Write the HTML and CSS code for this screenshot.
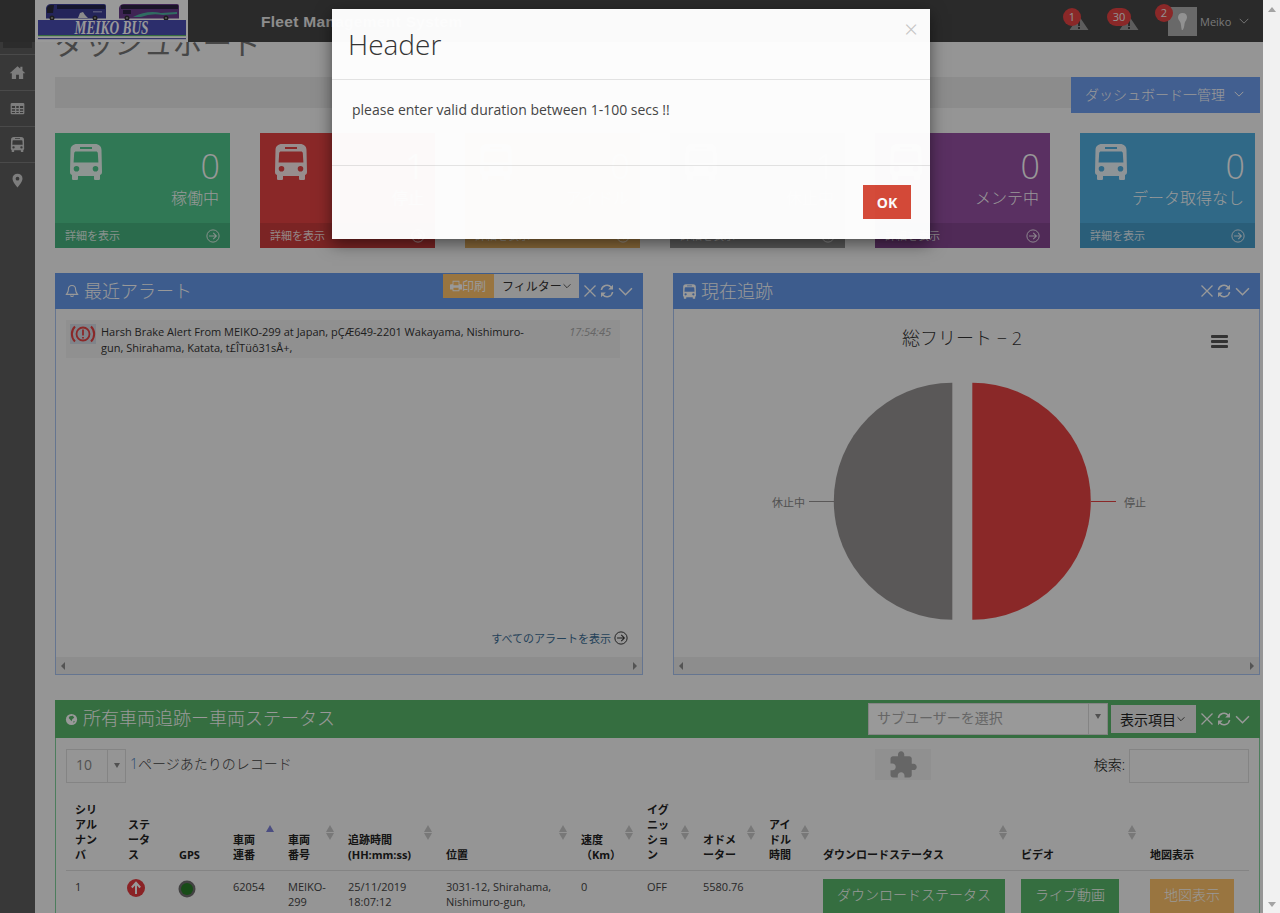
FILE: index.html
```html
<!DOCTYPE html>
<html lang="ja">
<head>
<meta charset="utf-8">
<title>Fleet Management System</title>
<link rel="stylesheet" href="styles.css">
</head>
<body>
<svg class="defs" aria-hidden="true">
  <symbol id="i-bus" viewBox="0 0 32 36"><path fill-rule="evenodd" d="M7 0h18c4 0 6.500 2.500 6.500 6l.5 22c0 1.500-.6 2.500-2 3v3.500c0 1-.6 1.500-1.500 1.500h-3c-1 0-1.500-.5-1.500-1.500V32H8v2.500C8 35.500 7.500 36 6.500 36h-3C2.600 36 2 35.500 2 34.500V31c-1.400-.5-2-1.500-2-3l.5-22C.5 2.500 3 0 7 0zM10 3v2h12V3zM6 7.500c-1 0-1.700.6-1.800 1.600l-.6 9.400h24.800l-.6-9.400c-.1-1-.8-1.600-1.800-1.600zM6.500 22a2.800 2.800 0 1 0 0 5.600 2.800 2.800 0 0 0 0-5.600zM25.500 22a2.800 2.800 0 1 0 0 5.600 2.800 2.800 0 0 0 0-5.600z"/></symbol>
  <symbol id="i-home" viewBox="0 0 24 24"><path d="M12 3 1 13h3v8h6v-6h4v6h6v-8h3l-4-3.700V4h-3v2.600z"/></symbol>
  <symbol id="i-table" viewBox="0 0 24 24"><path fill-rule="evenodd" d="M3 3h18a2 2 0 0 1 2 2v14a2 2 0 0 1-2 2H3a2 2 0 0 1-2-2V5a2 2 0 0 1 2-2zm0 5v3h5V8zm7 0v3h4V8zm6 0v3h5V8zM3 13v2.500h5V13zm7 0v2.500h4V13zm6 0v2.500h5V13zM3 17.500V19h5v-1.500zm7 0V19h4v-1.500zm6 0V19h5v-1.500z"/></symbol>
  <symbol id="i-marker" viewBox="0 0 24 24"><path fill-rule="evenodd" d="M12 1a8 8 0 0 0-8 8c0 5 8 14 8 14s8-9 8-14a8 8 0 0 0-8-8zm0 11a3 3 0 1 1 0-6 3 3 0 0 1 0 6z"/></symbol>
  <symbol id="i-arrow" viewBox="0 0 16 16"><circle cx="8" cy="8" r="7" fill="none" stroke="currentColor" stroke-width="1.100"/><path d="M3.500 8h8M8.300 4.500 11.800 8l-3.500 3.500" fill="none" stroke="currentColor" stroke-width="1.200"/></symbol>
  <symbol id="i-x" viewBox="0 0 14 14"><path d="M1.500 1.500l11 11M12.500 1.500l-11 11" fill="none" stroke="currentColor" stroke-width="1.300"/></symbol>
  <symbol id="i-refresh" viewBox="0 0 14 14"><path d="M1.400 6A5.600 5.600 0 0 1 11.200 3.200M12.600 8A5.600 5.600 0 0 1 2.800 10.800" fill="none" stroke="currentColor" stroke-width="1.500"/><path d="M13 .8v4.800H8.200zM1 13.200V8.400h4.800z"/></symbol>
  <symbol id="i-chev" viewBox="0 0 14 14"><path d="M1 4l6 6 6-6" fill="none" stroke="currentColor" stroke-width="1.400"/></symbol>
  <symbol id="i-bell" viewBox="0 0 14 14"><path d="M7 1.500c-2.400 0-3.600 1.800-3.600 4 0 2.600-1.300 3.700-2 4.900h11.200c-.7-1.200-2-2.300-2-4.900 0-2.200-1.200-4-3.600-4zM5.500 11.500a1.600 1.600 0 0 0 3 0" fill="none" stroke="currentColor" stroke-width="1.100"/></symbol>
  <symbol id="i-print" viewBox="0 0 14 14"><path fill-rule="evenodd" d="M3 1h8v4h2a1 1 0 0 1 1 1v5h-3v2H3v-2H0V6a1 1 0 0 1 1-1h2zm1 1v4h6V2zm0 7v3h6V9z"/></symbol>
  <symbol id="i-globe" viewBox="0 0 14 14"><circle cx="7" cy="7" r="6"/><path class="globe-land" d="M5 3.500l3.500-.5 1.500 2-2 1.500L7 9 5.500 7 4 5.500zM9 9l1.500-.5-1 2.500z"/></symbol>
  <symbol id="i-warn" viewBox="0 0 20 14"><path fill-rule="evenodd" d="M10 0l9.500 14H.5zM9 5v5h2V5zm0 6v2h2v-2z"/></symbol>
  <symbol id="i-puzzle" viewBox="0 0 24 24"><path d="M20.500 11H19V7c0-1.100-.9-2-2-2h-4V3.500C13 2.120 11.880 1 10.500 1S8 2.120 8 3.500V5H4c-1.100 0-1.990.9-1.990 2v3.800H3.500c1.490 0 2.700 1.210 2.700 2.700s-1.210 2.700-2.700 2.700H2V20c0 1.100.9 2 2 2h3.800v-1.500c0-1.490 1.210-2.700 2.700-2.700 1.490 0 2.700 1.210 2.700 2.700V22H17c1.100 0 2-.9 2-2v-4h1.500c1.380 0 2.500-1.120 2.500-2.500S21.880 11 20.500 11z"/></symbol>
</svg>

<div class="app">
  <div class="page">
    <header class="topbar">
      <div class="logo">
        <svg class="logo-art" viewBox="0 0 153 42">
          <path d="M11 8q1-4 5-4h53q2 0 2 2v12.500H11z" fill="#3c3e96"/>
          <path d="M12 8q1-3 4-3h3l-1 8h-6z" fill="#2a2a3c"/>
          <rect x="22" y="5" width="48" height="4" fill="#24264e"/>
          <path d="M43 18l2-5 3-1 2 3 3 3z" fill="#e8e8e8"/>
          <rect x="58" y="11" width="9" height="1.500" fill="#8a8cc8"/>
          <circle cx="17" cy="18" r="2.500" fill="#333"/><circle cx="17" cy="18" r="1" fill="#999"/>
          <circle cx="60" cy="18" r="2.500" fill="#333"/><circle cx="60" cy="18" r="1" fill="#999"/>
          <path d="M84 8q1-4 5-4h53q2 0 2 2v12.500H84z" fill="#6a3c8c"/>
          <rect x="86" y="5" width="57" height="4" fill="#2c2444"/>
          <path d="M98 17q14-7 28-4l16-1v2l-14 1q-12-2-22 2z" fill="#50b4a4"/>
          <path d="M88 10h8v4h-8z" fill="#2c2444"/>
          <circle cx="92" cy="18" r="2.500" fill="#333"/><circle cx="92" cy="18" r="1" fill="#999"/>
          <circle cx="131" cy="18" r="2.500" fill="#333"/><circle cx="131" cy="18" r="1" fill="#999"/>
          <rect x="3" y="20" width="148" height="15" fill="#4a4eb4"/>
          <rect x="3" y="35" width="148" height="1.200" fill="#5ab46c"/>
          <rect x="3" y="38" width="148" height="1.200" fill="#5a5ab4"/>
          <text x="76.500" y="33.500" class="logo-text" text-anchor="middle" textLength="74" lengthAdjust="spacingAndGlyphs">MEIKO BUS</text>
        </svg>
      </div>
      <div class="brand">Fleet Management System</div>
      <div class="top-right">
        <div class="alert alert-one">
          <svg class="warn"><use href="#i-warn"/></svg>
          <span class="badge badge-a">1</span>
        </div>
        <div class="alert alert-two">
          <svg class="warn"><use href="#i-warn"/></svg>
          <span class="badge badge-b">30</span>
        </div>
        <div class="user">
          <span class="badge badge-c">2</span>
          <span class="avatar"><svg class="avatar-art" viewBox="0 0 29 29"><path d="M14.500 6c3 0 4.700 2 4.500 4.600-.2 2.400-1.700 3.500-2.300 5.400-.4 2-.4 4.400-1.700 6.500-.6 1-1.200.7-1.400-.3-.5-2.400-.5-4.300-1-6.200-.7-2-2.600-3-2.600-5.400C10 8 11.800 6 14.500 6z"/></svg></span>
          <span class="user-name">Meiko</span>
          <svg class="user-chev"><use href="#i-chev"/></svg>
        </div>
      </div>
    </header>

    <nav class="sidebar">
      <div class="toggler"></div>
      <a class="side-item"><svg class="side-icon side-home"><use href="#i-home"/></svg></a>
      <a class="side-item"><svg class="side-icon"><use href="#i-table"/></svg></a>
      <a class="side-item"><svg class="side-icon"><use href="#i-bus"/></svg></a>
      <a class="side-item"><svg class="side-icon"><use href="#i-marker"/></svg></a>
    </nav>

    <main class="content">
      <h1 class="page-title">ダッシュボード</h1>
      <div class="crumb-bar">
        <button class="manage-btn"><span class="manage-label">ダッシュボード一管理</span><svg class="manage-chev"><use href="#i-chev"/></svg></button>
      </div>

      <section class="cards">
        <article class="card c-green">
          <div class="card-body"><svg class="card-bus"><use href="#i-bus"/></svg><div class="card-text"><div class="card-num">0</div><div class="card-label">稼働中</div></div></div>
          <div class="card-foot"><span class="foot-text">詳細を表示</span><svg class="card-arrow"><use href="#i-arrow"/></svg></div>
        </article>
        <article class="card c-red">
          <div class="card-body"><svg class="card-bus"><use href="#i-bus"/></svg><div class="card-text"><div class="card-num">1</div><div class="card-label">停止</div></div></div>
          <div class="card-foot"><span class="foot-text">詳細を表示</span><svg class="card-arrow"><use href="#i-arrow"/></svg></div>
        </article>
        <article class="card c-orange">
          <div class="card-body"><svg class="card-bus"><use href="#i-bus"/></svg><div class="card-text"><div class="card-num">0</div><div class="card-label">アイドル</div></div></div>
          <div class="card-foot"><span class="foot-text">詳細を表示</span><svg class="card-arrow"><use href="#i-arrow"/></svg></div>
        </article>
        <article class="card c-gray">
          <div class="card-body"><svg class="card-bus"><use href="#i-bus"/></svg><div class="card-text"><div class="card-num">1</div><div class="card-label">休止中</div></div></div>
          <div class="card-foot"><span class="foot-text">詳細を表示</span><svg class="card-arrow"><use href="#i-arrow"/></svg></div>
        </article>
        <article class="card c-purple">
          <div class="card-body"><svg class="card-bus"><use href="#i-bus"/></svg><div class="card-text"><div class="card-num">0</div><div class="card-label">メンテ中</div></div></div>
          <div class="card-foot"><span class="foot-text">詳細を表示</span><svg class="card-arrow"><use href="#i-arrow"/></svg></div>
        </article>
        <article class="card c-teal">
          <div class="card-body"><svg class="card-bus"><use href="#i-bus"/></svg><div class="card-text"><div class="card-num">0</div><div class="card-label">データ取得なし</div></div></div>
          <div class="card-foot"><span class="foot-text">詳細を表示</span><svg class="card-arrow"><use href="#i-arrow"/></svg></div>
        </article>
      </section>

      <section class="two-up">
        <div class="panel panel-blue">
          <div class="panel-head">
            <svg class="head-icon"><use href="#i-bell"/></svg>
            <span class="panel-title">最近アラート</span>
            <div class="head-tools tools-alert">
              <span class="print-btn"><svg class="print-icon"><use href="#i-print"/></svg>印刷</span>
              <span class="filter-btn">フィルター<svg class="mini-chev"><use href="#i-chev"/></svg></span>
            </div>
            <div class="head-actions">
              <svg class="act"><use href="#i-x"/></svg><svg class="act"><use href="#i-refresh"/></svg><svg class="act act-chev"><use href="#i-chev"/></svg>
            </div>
          </div>
          <div class="panel-body alert-body">
            <div class="alert-list">
              <div class="alert-row">
                <span class="brake-icon"><svg class="brake-art" viewBox="0 0 26 20"><circle cx="13" cy="10" r="6.500" fill="none" stroke="#e64343" stroke-width="1.800"/><path d="M5 2.500a10.500 10.500 0 0 0 0 15M21 2.500a10.500 10.500 0 0 1 0 15" fill="none" stroke="#e64343" stroke-width="2"/><path d="M13 5.500v6M13 13v1.500" stroke="#e64343" stroke-width="1.800"/></svg></span>
                <p class="alert-text">Harsh Brake Alert From MEIKO-299 at Japan, pÇÆ649-2201 Wakayama, Nishimuro-gun, Shirahama, Katata, t£ÎTüô31sÅ+,</p>
                <time class="alert-time">17:54:45</time>
              </div>
            </div>
            <a class="all-alerts">すべてのアラートを表示<svg class="all-icon"><use href="#i-arrow"/></svg></a>
            <div class="hscroll"><i class="arr-l"></i><i class="arr-r"></i></div>
          </div>
        </div>

        <div class="panel panel-blue">
          <div class="panel-head">
            <svg class="head-icon head-bus"><use href="#i-bus"/></svg>
            <span class="panel-title">現在追跡</span>
            <div class="head-actions">
              <svg class="act"><use href="#i-x"/></svg><svg class="act"><use href="#i-refresh"/></svg><svg class="act act-chev"><use href="#i-chev"/></svg>
            </div>
          </div>
          <div class="panel-body alert-body">
            <svg class="chart" viewBox="0 0 585 346">
              <text x="288" y="35" class="chart-title" text-anchor="middle">総フリート − 2</text>
              <rect x="537" y="25" width="17" height="3" rx="1" class="burger"/>
              <rect x="537" y="30" width="17" height="3" rx="1" class="burger"/>
              <rect x="537" y="35" width="17" height="3" rx="1" class="burger"/>
              <path d="M278.300 72.700A118.500 118.500 0 0 0 278.300 309.700Z" class="slice-gray"/>
              <path d="M298.300 72.700A118.500 118.500 0 0 1 298.300 309.700Z" class="slice-red"/>
              <path d="M135 191.500h25" class="lead-gray"/>
              <path d="M417 191.500h25" class="lead-red"/>
              <text x="98" y="197" class="chart-label">休止中</text>
              <text x="450" y="197" class="chart-label">停止</text>
            </svg>
            <div class="hscroll"><i class="arr-l"></i><i class="arr-r"></i></div>
          </div>
        </div>
      </section>

      <section class="panel panel-green panel-table">
        <div class="panel-head head-tall">
          <svg class="head-icon head-globe"><use href="#i-globe"/></svg>
          <span class="panel-title">所有車両追跡ー車両ステータス</span>
          <div class="head-tools tools-table">
            <div class="subuser"><span class="subuser-text">サブユーザーを選択</span><span class="subuser-arrow"><i class="tri-down"></i></span></div>
            <span class="columns-btn">表示項目<svg class="mini-chev"><use href="#i-chev"/></svg></span>
          </div>
          <div class="head-actions">
            <svg class="act"><use href="#i-x"/></svg><svg class="act"><use href="#i-refresh"/></svg><svg class="act act-chev"><use href="#i-chev"/></svg>
          </div>
        </div>
        <div class="table-body">
          <div class="table-tools">
            <div class="length">
              <span class="length-box"><span class="length-val">10</span><span class="length-arrow"><i class="tri-down"></i></span></span>
              <span class="length-label"><span class="length-one">1</span>ページあたりのレコード</span>
            </div>
            <div class="plugin"><svg class="plugin-icon"><use href="#i-puzzle"/></svg></div>
            <label class="search"><span class="search-label">検索:</span><span class="search-box"></span></label>
          </div>
          <table class="grid">
            <colgroup>
              <col class="w53"><col class="w51"><col class="w54"><col class="w55"><col class="w60"><col class="w98"><col class="w135"><col class="w66"><col class="w56"><col class="w66"><col class="w54"><col class="w198"><col class="w129"><col class="w108">
            </colgroup>
            <thead>
              <tr>
                <th>シリアルナンバ</th>
                <th>ステータス</th>
                <th>GPS</th>
                <th class="sort-asc">車両連番</th>
                <th class="sort">車両番号</th>
                <th class="sort">追跡時間<br>(HH:mm:ss)</th>
                <th class="sort">位置</th>
                <th class="sort">速度<br>（Km）</th>
                <th class="sort">イグニッション</th>
                <th class="sort">オドメーター</th>
                <th class="sort">アイドル時間</th>
                <th class="sort">ダウンロードステータス</th>
                <th class="sort">ビデオ</th>
                <th>地図表示</th>
              </tr>
            </thead>
            <tbody>
              <tr>
                <td>1</td>
                <td><svg class="status-icon" viewBox="0 0 18 18"><circle cx="9" cy="9" r="9" fill="#e63a3f"/><path d="M9 15V5M4.800 8.500 9 3.800l4.200 4.700" fill="none" stroke="#fff" stroke-width="2"/></svg></td>
                <td><svg class="gps-icon" viewBox="0 0 18 18"><circle cx="9" cy="9" r="8.500" fill="#6e6e6e"/><circle cx="9" cy="9" r="6" fill="#287f28"/></svg></td>
                <td>62054</td>
                <td>MEIKO-299</td>
                <td>25/11/2019 18:07:12</td>
                <td>3031-12, Shirahama, Nishimuro-gun, Wakayama</td>
                <td>0</td>
                <td>OFF</td>
                <td>5580.76</td>
                <td></td>
                <td><a class="tbtn tbtn-green">ダウンロードステータス</a></td>
                <td><a class="tbtn tbtn-green">ライブ動画</a></td>
                <td><a class="tbtn tbtn-orange">地図表示</a></td>
              </tr>
            </tbody>
          </table>
        </div>
      </section>
    </main>

    <div class="backdrop"></div>

    <div class="modal" role="dialog">
      <div class="modal-head">
        <h2 class="modal-title">Header</h2>
        <span class="modal-close">×</span>
      </div>
      <div class="modal-body">please enter valid duration between 1-100 secs !!</div>
      <div class="modal-foot"><button class="ok-btn">OK</button></div>
    </div>
  </div>

  <div class="vscroll"><i class="arr-u"></i><i class="arr-d"></i></div>
</div>
</body>
</html>
```

FILE: styles.css
```css
* { box-sizing: border-box; }
html, body { margin: 0; padding: 0; height: 913px; overflow: hidden; }
body {
  font-family: "Open Sans", "Noto Sans CJK JP", sans-serif;
  font-size: 14px;
  color: #333;
  background: #f8f8f8;
}
.defs { position: absolute; width: 0; height: 0; }
svg { fill: currentColor; display: block; }

.app { display: flex; height: 913px; }
.page { position: relative; width: 1263px; height: 913px; display: flex; overflow: hidden; background: #f8f8f8; }

.vscroll { width: 17px; height: 913px; background: #f1f1f1; display: flex; flex-direction: column; justify-content: space-between; align-items: center; padding: 7px 0 6px; }
.arr-u { width: 0; height: 0; border: 4.500px solid transparent; border-top: 0; border-bottom: 5px solid #a3a3a3; }
.arr-d { width: 0; height: 0; border: 4.500px solid transparent; border-bottom: 0; border-top: 5px solid #a3a3a3; }

/* top bar */
.topbar { position: absolute; top: 0; left: 0; width: 100%; height: 42px; z-index: 2; background: #464646; display: flex; align-items: center; padding-left: 35px; }
.logo { width: 153px; height: 42px; background: #fff; }
.logo-art { width: 153px; height: 42px; }
.logo-text { font-family: "Liberation Serif", serif; font-style: italic; font-weight: 700; font-size: 18px; fill: #fff; }
.brand { margin-left: 73px; padding-top: 2px; font-family: "Liberation Sans", sans-serif; font-weight: 700; font-size: 15.500px; color: #ececec; letter-spacing: .3px; }
.top-right { margin-left: auto; display: flex; align-items: center; padding-right: 14px; }
.alert { position: relative; height: 14px; margin-top: 4px; }
.alert-one { margin-right: 30px; }
.alert-two { margin-right: 29px; }
.warn { width: 20px; height: 14px; color: #9c9c9c; }
.badge { position: absolute; display: flex; align-items: center; justify-content: center; height: 18px; min-width: 18px; border-radius: 9px; background: #e64343; color: #f4f4f4; font-size: 11px; line-height: 18px; padding: 0 3px; }
.badge-a { left: -6px; top: -8px; }
.badge-b { left: -12px; top: -8px; width: 24px; }
.badge-c { left: -13px; top: 4px; }
.user { position: relative; display: flex; align-items: center; height: 42px; }
.avatar { width: 29px; height: 29px; background: #b0b0b0; display: block; }
.avatar-art { width: 29px; height: 29px; color: #f2f2f2; }
.user-name { margin-left: 3px; font-size: 11px; color: #c8c8c8; width: 39px; }
.user-chev { width: 10px; height: 10px; color: #c0c0c0; }

/* sidebar */
.sidebar { width: 35px; flex: none; background: #5e5e5e; padding-top: 42px; }
.toggler { height: 6px; margin: 0 3px 6px; background: #4a4a4a; }
.side-item { display: flex; height: 36px; align-items: center; justify-content: center; border-top: 1px solid #7c7c7c; }
.side-icon { width: 15px; height: 15px; color: #d0d0d0; }
.side-home { width: 17px; height: 17px; }

/* content */
.content { width: 1228px; padding: 0 3px 0 20px; }
.page-title { margin: 26px 0 0; height: 34px; line-height: 34px; font-size: 29.500px; font-weight: 400; color: #777; }
.crumb-bar { margin-top: 17px; height: 31px; background: #eaeaea; display: flex; justify-content: flex-end; }
.manage-btn { width: 189px; height: 36px; border: 0; background: #6f9ef0; color: #fff; font: inherit; font-size: 14px; display: flex; align-items: center; padding: 0 0 2px 14px; }
.manage-label { font-weight: 300; }
.manage-chev { width: 10px; height: 10px; margin-left: 9px; }

.cards { margin-top: 25px; width: 1200px; display: grid; grid-template-columns: repeat(6, 175px); gap: 30px; }
.card { height: 115px; color: #fff; display: flex; flex-direction: column; }
.c-green { background: #50c88e; }
.c-red { background: #e64343; }
.c-orange { background: #ffc36b; }
.c-gray { background: #a6a6a6; }
.c-purple { background: #9650a3; }
.c-teal { background: #50afe1; }
.card-body { height: 90px; position: relative; display: flex; padding: 11px 10px 0 15px; }
.card-bus { width: 32px; height: 36px; opacity: .9; }
.card-text { margin-left: auto; text-align: right; }
.card-num { font-weight: 300; font-size: 34px; line-height: 42px; margin-top: 1px; }
.card-label { font-size: 16px; line-height: 24px; margin-top: -1px; margin-right: 1px; font-weight: 300; }
.card-foot { height: 25px; background: rgba(0,0,0,.1); display: flex; align-items: center; justify-content: space-between; padding: 0 10px 2px; font-size: 11px; color: rgba(255,255,255,.85); }
.card-arrow { width: 14px; height: 14px; margin-top: 2px; }

.two-up { margin-top: 25px; display: grid; grid-template-columns: 588px 587px; gap: 30px; }

/* panels */
.panel { display: flex; flex-direction: column; }
.panel-blue { height: 402px; border: 1px solid #a8c4f0; border-top: 0; }
.panel-green { border: 1px solid #7fd09a; border-top: 0; }
.panel-table { margin-top: 25px; height: 300px; }
.panel-head { height: 36px; flex: none; display: flex; align-items: center; color: #fff; padding: 0 9px 0 9px; }
.panel-blue .panel-head { background: #669aeb; margin: 0 -1px; padding: 0 10px; }
.panel-green .panel-head { background: #59b86b; margin: 0 -1px; padding: 0 10px; }
.head-tall { height: 38px; }
.head-tall .panel-title { margin-top: -5px; }
.head-icon { width: 14px; height: 14px; margin-right: 5px; }
.head-bus { width: 13px; height: 15px; margin-right: 5px; }
.head-globe { width: 13px; height: 13px; margin-right: 5px; }
.globe-land { fill: #59b86b; }
.panel-title { font-size: 18px; font-weight: 300; white-space: nowrap; margin-top: -3px; }
.head-tools { margin-left: auto; display: flex; color: #333; }
.tools-alert { align-self: flex-start; margin-top: 1px; margin-right: 4px; }
.print-btn { width: 51px; height: 24px; background: #ffc36b; color: #fff; font-size: 12px; display: flex; align-items: center; padding-left: 7px; }
.print-icon { width: 12px; height: 12px; }
.filter-btn { width: 85px; height: 24px; background: #f4f4f4; font-size: 12px; display: flex; align-items: center; padding-left: 8px; }
.mini-chev { width: 8px; height: 8px; margin-left: 1px; }
.head-actions { display: flex; align-items: center; flex: none; margin-left: 0; }
.panel-head > .panel-title + .head-actions { margin-left: auto; }
.act { width: 14px; height: 14px; margin-right: 3px; }
.act-chev { width: 15px; height: 15px; margin-right: 0; margin-left: 1px; }

.panel-body { flex: 1; display: flex; flex-direction: column; min-height: 0; }
.alert-list { flex: 1; padding: 11px 10px 0; }
.alert-row { width: 554px; height: 38px; background: #f0f0f0; display: flex; padding: 4px 9px 0 4px; }
.brake-icon { width: 26px; height: 20px; background: #d6dde6; flex: none; }
.brake-art { width: 26px; height: 20px; }
.alert-text { margin: 0 0 0 5px; width: 432px; flex: none; font-size: 11px; line-height: 16px; color: #333; }
.alert-time { margin-left: auto; font-size: 11px; font-style: italic; color: #aaa; line-height: 16px; }
.all-alerts { align-self: flex-end; display: flex; align-items: center; margin: 0 14px 11px 0; font-size: 11px; color: #3c6e96; height: 16px; }
.all-icon { width: 14px; height: 14px; margin-left: 3px; color: #333; }
.hscroll { height: 17px; flex: none; background: #ebebeb; display: flex; justify-content: space-between; align-items: center; padding: 0 5px; }
.arr-l { width: 0; height: 0; border: 4px solid transparent; border-left: 0; border-right: 4px solid #8c8c8c; }
.arr-r { width: 0; height: 0; border: 4px solid transparent; border-right: 0; border-left: 4px solid #8c8c8c; }

.chart { flex: 1; width: 100%; min-height: 0; }
.chart-title { font-size: 18px; fill: #333; font-weight: 300; }
.chart-label { font-size: 11px; fill: #888; }
.burger { fill: #555; }
.slice-gray { fill: #969393; }
.slice-red { fill: #e64343; }
.lead-gray { stroke: #969393; fill: none; }
.lead-red { stroke: #e64343; fill: none; }

/* subuser */
.tools-table { align-items: center; margin-right: 4px; }
.subuser { width: 240px; height: 32px; background: #fff; border: 1px solid #ddd; display: flex; color: #aaa; font-size: 14px; margin-right: 3px; }
.subuser-text { flex: 1; padding-left: 8px; line-height: 28px; }
.subuser-arrow { width: 19px; border-left: 1px solid #ddd; display: flex; justify-content: center; padding-top: 10px; }
.tri-down { width: 0; height: 0; border: 3.500px solid transparent; border-bottom: 0; border-top: 5px solid #888; display: block; }
.columns-btn { width: 85px; height: 28px; background: #ebebeb; color: #222; font-size: 14px; display: flex; align-items: center; padding-left: 9px; }

/* table region */
.table-body { padding: 11px 10px 0; flex: 1; min-height: 0; overflow: hidden; }
.table-tools { display: flex; height: 34px; align-items: flex-start; }
.length { width: 809px; display: flex; align-items: center; height: 34px; }
.length-box { width: 60px; height: 34px; border: 1px solid #ddd; display: flex; color: #888; }
.length-val { flex: 1; padding-left: 9px; line-height: 30px; }
.length-arrow { width: 18px; border-left: 1px solid #ddd; display: flex; justify-content: center; padding-top: 13px; }
.length-label { margin: -7px 0 0 4px; color: #444; font-size: 14px; font-weight: 300; }
.length-one { color: #4a7fc0; }
.plugin { width: 56px; height: 31px; background: #f0f0f0; display: flex; align-items: center; justify-content: center; }
.plugin-icon { width: 30px; height: 30px; color: #aaa; }
.search { margin-left: auto; display: flex; align-items: center; height: 34px; color: #111; font-size: 14px; font-weight: 300; }
.search-label { margin-top: -4px; }
.search-box { width: 120px; height: 34px; border: 1px solid #ddd; margin-left: 4px; background: #f8f8f8; }

.grid { margin-top: 17px; width: 1183px; table-layout: fixed; border-collapse: collapse; font-size: 11px; line-height: 15px; }
.w53 { width: 53px; } .w51 { width: 51px; } .w54 { width: 54px; } .w55 { width: 55px; }
.w60 { width: 60px; } .w98 { width: 98px; } .w135 { width: 135px; } .w66 { width: 66px; }
.w56 { width: 56px; } .w198 { width: 198px; } .w129 { width: 129px; } .w108 { width: 108px; }
.grid th { position: relative; padding: 0 20px 8px 9px; vertical-align: bottom; text-align: left; font-weight: 700; color: #222; border-bottom: 1px solid #ddd; word-break: break-all; line-break: anywhere; }
.grid td { padding: 8px 9px 0; vertical-align: top; color: #444; }
.grid th:first-child { height: 70px; }
.sort::before, .sort::after, .sort-asc::before { content: ""; position: absolute; right: 5px; width: 0; height: 0; border: 4px solid transparent; }
.sort::before { top: 25px; border-top: 0; border-bottom: 7px solid #c8c8c8; }
.sort::after { top: 33px; border-bottom: 0; border-top: 7px solid #c8c8c8; }
.sort-asc::before { top: 25px; border-top: 0; border-bottom: 7px solid #7d80d8; }
.status-icon { width: 18px; height: 18px; margin-left: -1px; }
.gps-icon { width: 18px; height: 18px; margin: 1px 0 0 -1px; }
.tbtn { display: inline-block; height: 36px; margin-top: 0; line-height: 32px; color: #fff; font-size: 14px; white-space: nowrap; text-align: center; font-weight: 300; }
.grid td:nth-child(12) .tbtn { width: 182px; }
.grid td:nth-child(13) .tbtn { width: 98px; }
.grid td:nth-child(14) .tbtn { width: 84px; }
.tbtn-green { background: #59b86b; }
.tbtn-orange { background: #ffc36b; }

/* modal layer */
.backdrop { position: absolute; inset: 0; z-index: 5; background: rgba(0,0,0,.4); }
.modal { position: absolute; z-index: 6; left: 332px; top: 9px; width: 598px; height: 230px; background: #fff; opacity: .975; box-shadow: 0 5px 15px rgba(0,0,0,.5); display: flex; flex-direction: column; }
.modal-head { height: 71px; flex: none; border-bottom: 1px solid #e5e5e5; position: relative; padding: 19px 16px 0; }
.modal-title { margin: 0; font-size: 28px; line-height: 32px; font-weight: 300; color: #333; }
.modal-close { position: absolute; top: 8px; right: 12px; font-size: 24px; line-height: 24px; font-weight: 300; color: #c8c8c8; }
.modal-body { height: 86px; flex: none; border-bottom: 1px solid #e5e5e5; padding: 20px 20px 0; font-size: 14px; line-height: 20px; color: #444; }
.modal-foot { flex: 1; display: flex; justify-content: flex-end; align-items: flex-start; padding: 19px 19px 0 0; }
.ok-btn { width: 48px; height: 34px; border: 0; background: #d64a38; color: #fff; font: inherit; font-size: 14px; font-weight: 700; padding: 0; }
```
